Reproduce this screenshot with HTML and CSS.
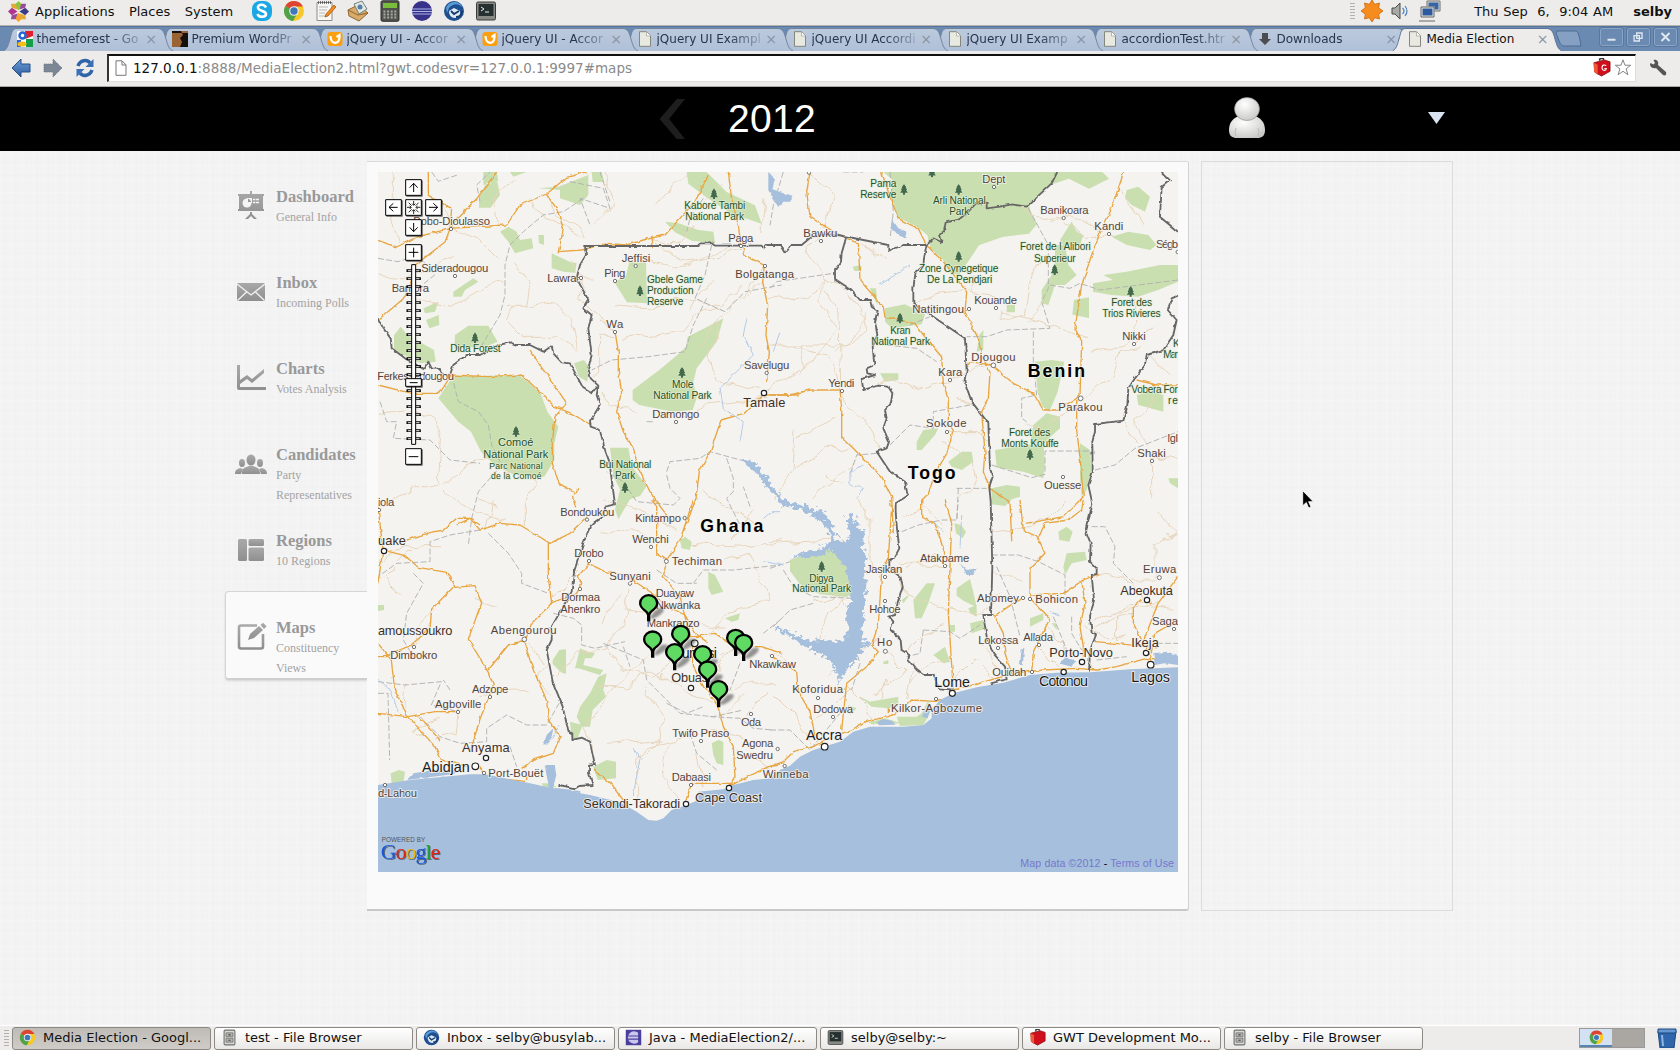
FILE: index.html
```html
<!DOCTYPE html>
<html lang="en">
<head>
<meta charset="utf-8">
<title>Media Election</title>
<link rel="stylesheet" href="styles.css">
</head>
<body>
<svg class="defs" width="0" height="0">
  <defs>
    <linearGradient id="tabFill" x1="0" y1="0" x2="0" y2="1"><stop offset="0" stop-color="#bccadd"/><stop offset="1" stop-color="#b0c0d7"/></linearGradient>
    <linearGradient id="iconGrey" x1="0" y1="0" x2="0" y2="1"><stop offset="0" stop-color="#a9a9a9"/><stop offset="1" stop-color="#8f8f8f"/></linearGradient>
    <linearGradient id="blueArrow" x1="0" y1="0" x2="0" y2="1"><stop offset="0" stop-color="#6f9fd6"/><stop offset="1" stop-color="#2c5c9e"/></linearGradient>
    <radialGradient id="person" cx=".4" cy=".3" r=".8"><stop offset="0" stop-color="#fff"/><stop offset="1" stop-color="#c4c4c2"/></radialGradient>
    <symbol id="tab" viewBox="0 0 172 24"><path d="M0.5 24C4 22 5 19 7 12C9 5 9 1.500 14 1.500H154C160 1.500 161 5 163 12C165 19 166 22 170 24"/></symbol>
    <symbol id="page" viewBox="0 0 16 16"><path d="M2.500.7h7l4 4v10.600h-11z" fill="#e8eae2" stroke="#85867c"/><path d="M9.500 1v4h4" fill="#fff" stroke="#aaa99f" stroke-width=".8"/></symbol>
    <symbol id="jq" viewBox="0 0 16 16"><rect x=".5" y="1" width="15" height="14" rx="3" fill="#f99f10"/><path d="M3.500 5c0 9 9 9 9 1V4l-3 2" fill="none" stroke="#fff" stroke-width="2.200"/></symbol>
    <symbol id="chrome" viewBox="0 0 22 22"><circle cx="11" cy="11" r="10" fill="#f6c928"/><path d="M11 11L2.300 6A10 10 0 0 1 20 6.500H11z" fill="#dd4432"/><path d="M2.300 6A10 10 0 0 0 10 21l4.500-8L11 11z" fill="#4fa24a"/><circle cx="11" cy="11" r="4.800" fill="#f4f4f4"/><circle cx="11" cy="11" r="3.700" fill="#3e78b8"/></symbol>
    <symbol id="bird" viewBox="0 0 22 22"><circle cx="11" cy="11" r="10" fill="#1e4f8f"/><path d="M3 8C6 0 17 0 20 8c-4-5-10-5-14 0l-2 5z" fill="#5b9bd8"/><path d="M6 11l5-3 6 3c1 4-2 7-5 7-4 0-6-3-6-7z" fill="#dfe9f3"/><path d="M8 11l3 3 5-3M13 17c4 0 6-3 6-6" fill="none" stroke="#123a6d" stroke-width="1.800"/></symbol>
    <symbol id="eclipse" viewBox="0 0 22 22"><circle cx="11" cy="11" r="10" fill="#39328a"/><path d="M1.500 9h19M1 11.500h20M1.500 14h19" stroke="#a9b6e8" stroke-width="1.200"/></symbol>
    <symbol id="term" viewBox="0 0 22 22"><rect x="1.500" y="2" width="19" height="18" rx="1.500" fill="#888a85" stroke="#3c3d3a"/><rect x="3.500" y="4" width="15" height="12" fill="#273030"/><path d="M6 7l3 2-3 2M10 12h4" fill="none" stroke="#e8f0e8"/></symbol>
    <symbol id="cabinet" viewBox="0 0 22 22"><rect x="4" y="1.500" width="14" height="19" rx="1.500" fill="#d7d7d3" stroke="#6e706b" stroke-width="1.400"/><path d="M6.500 5h9v5h-9zM6.500 12h9v5h-9z" fill="#b4b6b0" stroke="#6e706b"/><path d="M9.500 7.500h3M9.500 14.500h3" stroke="#444" stroke-width="1.500"/></symbol>
    <symbol id="toolbox" viewBox="0 0 20 20"><path d="M2 5L13 2l6 2v10l-9 5-7-4z" fill="#cf0f1b" stroke="#800a10" stroke-width=".8"/><path d="M2 5l4 2v11l-4-4z" fill="#ee5b38"/><path d="M8 3V1l4-1v2" fill="none" stroke="#333" stroke-width="1.500"/></symbol>
    <symbol id="tree" viewBox="-12 -18 24 34"><path d="M0-16L7-6H5L9 1H6L11 9H3v5h-6V9h-8L-6 1h-3l4-7h-2z" fill="#41694a" stroke="#e7efdc" stroke-width="2" paint-order="stroke"/></symbol>
    <g id="pin"><path d="M6-16L26-38Q50-44 44-30Q34-14 8-6z" fill="#000" opacity=".4" filter="url(#soft)"/><path d="M-5 0V-18C-8-32-29-35-29-55A29 27 0 0 1 29-55C29-35 8-32 5-18V0z"/><path d="M0-26C-6-36-22-40-22-55A22 20 0 0 1 22-55C22-40 6-36 0-26z" fill="#5fda63"/></g>
    <filter id="soft"><feGaussianBlur stdDeviation="3"/></filter>
    <filter id="rough" x="-5%" y="-5%" width="110%" height="110%"><feTurbulence type="fractalNoise" baseFrequency=".07" numOctaves="3" seed="4"/><feDisplacementMap in="SourceGraphic" scale="34" xChannelSelector="R" yChannelSelector="G"/></filter>
    <filter id="wiggle" x="-5%" y="-5%" width="110%" height="110%"><feTurbulence type="fractalNoise" baseFrequency=".02" numOctaves="2" seed="9"/><feDisplacementMap in="SourceGraphic" scale="34" xChannelSelector="R" yChannelSelector="G"/></filter>
    <filter id="jag" x="-5%" y="-5%" width="110%" height="110%"><feTurbulence type="fractalNoise" baseFrequency=".05" numOctaves="2" seed="2"/><feDisplacementMap in="SourceGraphic" scale="10" xChannelSelector="R" yChannelSelector="G"/></filter>
  </defs>
</svg>
<div class="desktop">
  <header class="panel">
    <svg class="foot" viewBox="0 0 22 22"><path d="M11 0l4 4-4 6-4-6z" fill="#8cc63f"/><path d="M11 22l4-4-4-6-4 6z" fill="#f2a52c"/><path d="M0 11l4-4 6 4-6 4z" fill="#b3348c"/><path d="M22 11l-4-4-6 4 6 4z" fill="#3c3b85"/><path d="M3 3h5l2 6-6-2zM19 19h-5l-2-6 6 2z" fill="#e2a838"/><path d="M19 3h-5l-2 6 6-2zM3 19h5l2-6-6 2z" fill="#9a4b9c"/></svg>
    <nav class="menus"><span>Applications</span><span>Places</span><span>System</span></nav>
    <div class="launchers">
      <svg viewBox="0 0 22 22"><rect x="1" y="1" width="20" height="20" rx="8" fill="#1aa8e4"/><path d="M15 7.500C13 3 6 4.500 7 8s8 2.500 8 6-7 4-8.500 0" fill="none" stroke="#fff" stroke-width="2.600"/></svg>
      <svg><use href="#chrome"/></svg>
      <svg viewBox="0 0 22 22"><path d="M2 2.500h15v18H2z" fill="#f6f6f2" stroke="#8d8d88"/><path d="M3 2.500h13" stroke="#555" stroke-width="2.500" stroke-dasharray="1 1"/><path d="M4 7h9M4 10h8M4 13h6M4 16h7" stroke="#b9b9b4"/><path d="M10 17l1-3 8-9 2 2-8 9z" fill="#f58a1c" stroke="#9b4c08" stroke-width=".7"/></svg>
      <svg viewBox="0 0 22 22"><path d="M1 10L11 5l10 8-9 8-10-5z" fill="#d8ab6a" stroke="#8c6530"/><path d="M7 4l8-3 5 8-8 5z" fill="#dfe8e4" stroke="#75807d"/><path d="M1 10l10 5 10-2" fill="none" stroke="#8c6530"/><circle cx="13" cy="7" r="2.500" fill="#577fa5"/></svg>
      <svg viewBox="0 0 22 22"><rect x="2" y=".8" width="18" height="20.500" rx="1.500" fill="#50524e" stroke="#2e302d"/><rect x="4" y="3" width="14" height="5" fill="#78bd3c"/><path d="M4.500 11.500h13M4.500 14.500h13M4.500 17.500h13" stroke="#a8aaa5" stroke-width="1.800" stroke-dasharray="2 1.600"/></svg>
      <svg><use href="#eclipse"/></svg>
      <svg><use href="#bird"/></svg>
      <svg><use href="#term"/></svg>
    </div>
    <div class="tray">
      <i class="grip"></i>
      <svg class="sun" viewBox="0 0 22 22"><path d="M11 0l2.700 4.300L18.500 3l-.8 4.800L22 11l-4.300 3.200.8 4.800-4.800-1.300L11 22l-2.700-4.300L3.500 19l.8-4.800L0 11l4.300-3.200L3.500 3l4.800 1.300z" fill="#f68b1e" stroke="#cb6708" stroke-width=".8"/></svg>
      <svg class="vol" viewBox="0 0 22 22"><path d="M3 8h3l5-5v16l-5-5H3z" fill="#a8aaa5" stroke="#4a4c49"/><path d="M13.500 8q3 3 0 6M16 6q4 5 0 10" fill="none" stroke="#4e7fbd" stroke-width="1.200"/></svg>
      <svg class="net" viewBox="0 0 22 22"><path d="M8.500 1.500h12v9h-12z" fill="#3665a6" stroke="#d9d9d5" stroke-width="2"/><path d="M8 1h13v10H8z" fill="none" stroke="#777"/><path d="M2.500 7.500h12v9h-12z" fill="#2d5a9c" stroke="#e5e5e2" stroke-width="2"/><path d="M2 7h13v10H2zM0 21h16" fill="none" stroke="#666"/></svg>
      <span class="clock">Thu Sep&nbsp; 6,&nbsp; 9:04 AM</span><b class="who">selby</b>
    </div>
  </header>

  <div class="tabstrip">
    <div class="tab"><svg class="shape"><use href="#tab"/></svg><svg class="fav" viewBox="0 0 16 16"><rect width="16" height="16" rx="1" fill="#fff"/><path d="M8 0h8v5l-8 3z" fill="#e2202c"/><path d="M9 8h7v8H9z" fill="#13a04a"/><path d="M0 9h4v7H0z" fill="#2a64d8"/><circle cx="5.500" cy="4.500" r="3" fill="none" stroke="#2866d3" stroke-width="2.500"/><ellipse cx="5" cy="13" rx="4.500" ry="2.600" fill="#f7bd17"/></svg><span>themeforest - Go</span><i>×</i></div>
    <div class="tab"><svg class="shape"><use href="#tab"/></svg><svg class="fav" viewBox="0 0 16 16"><path fill="#9a6334" d="M0 0h16v16H0z"/><path d="M16 0H9l2 4-3 3 2 4-2 5h8zM0 0h16v2H0z" fill="#15100c"/></svg><span>Premium WordPr</span><i>×</i></div>
    <div class="tab"><svg class="shape"><use href="#tab"/></svg><svg class="fav"><use href="#jq"/></svg><span>jQuery UI - Accor</span><i>×</i></div>
    <div class="tab"><svg class="shape"><use href="#tab"/></svg><svg class="fav"><use href="#jq"/></svg><span>jQuery UI - Accor</span><i>×</i></div>
    <div class="tab"><svg class="shape"><use href="#tab"/></svg><svg class="fav"><use href="#page"/></svg><span>jQuery UI Exampl</span><i>×</i></div>
    <div class="tab"><svg class="shape"><use href="#tab"/></svg><svg class="fav"><use href="#page"/></svg><span>jQuery UI Accordi</span><i>×</i></div>
    <div class="tab"><svg class="shape"><use href="#tab"/></svg><svg class="fav"><use href="#page"/></svg><span>jQuery UI Examp</span><i>×</i></div>
    <div class="tab"><svg class="shape"><use href="#tab"/></svg><svg class="fav"><use href="#page"/></svg><span>accordionTest.htr</span><i>×</i></div>
    <div class="tab"><svg class="shape"><use href="#tab"/></svg><svg class="fav" viewBox="0 0 16 16"><path d="M5 2h6v6h3l-6 6-6-6h3z" fill="#4b4d50"/></svg><span>Downloads</span><i>×</i></div>
    <div class="tab active"><svg class="shape"><use href="#tab"/></svg><svg class="fav"><use href="#page"/></svg><span>Media Election</span><i>×</i></div>
    <svg class="newtab" viewBox="0 0 27 18"><path d="M2 1h18c3 0 4 3 6 15H9C5 16 4 10 1 3z" fill="#86a0c4" stroke="#4e6d96"/></svg>
    <div class="winbtns">
      <svg viewBox="0 0 23 18"><path d="M7 12h9" stroke="#dfe7f1" stroke-width="2.200"/></svg>
      <svg viewBox="0 0 23 18"><path d="M9.500 4.500h6v6h-6zM6.500 7.500h6v6h-6z" fill="none" stroke="#dfe7f1" stroke-width="1.500"/></svg>
      <svg viewBox="0 0 23 18"><path d="M7 4.500l9 9M16 4.500l-9 9" stroke="#dfe7f1" stroke-width="2.200"/></svg>
    </div>
  </div>

  <div class="toolbar">
    <svg class="nav-ic" viewBox="0 0 20 20"><path d="M1 10L10 1v5h9v8h-9v5z" fill="url(#blueArrow)" stroke="#274f86"/></svg>
    <svg class="nav-ic" viewBox="0 0 20 20"><path d="M19 10L10 1v5H1v8h9v5z" fill="#7b8794" stroke="#6b7580" stroke-dasharray="1 1"/></svg>
    <svg class="nav-ic" viewBox="0 0 20 20"><path d="M3 8C5 2 12 1 15 5M17 12c-2 6-9 7-12 3" fill="none" stroke="#2f64a8" stroke-width="3.500"/><path d="M18.500 1v8h-8zM1.500 19v-8h8z" fill="#3a70b5"/></svg>
    <div class="url">
      <svg viewBox="0 0 12 16"><path d="M1 .8h6l4 4v10.500H1zM7 1v4h4" fill="#fff" stroke="#777"/></svg>
      <p><b>127.0.0.1</b>:8888/MediaElection2.html?gwt.codesvr=127.0.0.1:9997#maps</p>
      <svg class="gwt" viewBox="0 0 20 20"><use href="#toolbox" width="20" height="20"/><path d="M15 8c-5-3-6 5-2 5 2 0 2-2 2-2h-2" fill="none" stroke="#fff" stroke-width="1.200"/></svg>
      <svg class="star" viewBox="0 0 20 20"><path d="M10 1.500l2.200 6h6.300l-5 4 1.900 6.500-5.400-3.800L4.600 18l1.900-6.500-5-4h6.300z" fill="#fff" stroke="#777"/></svg>
    </div>
    <svg class="wrench" viewBox="0 0 18 18"><path d="M1.500 4l3 1.500L6 4 4.500 1C8 0 10 3 9 6l8 7c1 3-1 4-3 3L7 9C3 10 0 7 1.500 4z" fill="#555"/></svg>
  </div>

  <main class="site">
    <div class="topbar">
      <svg class="prev" viewBox="0 0 28 44"><path d="M19 1h8.500L11 22l16.500 21H19L1 22z" fill="#1e1e1e"/></svg>
      <h1>2012</h1>
      <svg class="user" viewBox="0 0 38 42"><path d="M1 33C1 25 6 20 12 19h14c6 1 11 6 11 14 0 6-3 8-8 8H9c-5 0-8-2-8-8z" fill="url(#person)"/><path d="M8 31q-2 4 0 8M30 31q2 4 0 8" fill="none" stroke="#bbb"/><ellipse cx="19" cy="12" rx="12.500" ry="11.500" fill="url(#person)" stroke="#8b8b88" stroke-width=".6"/></svg>
      <svg class="caret" viewBox="0 0 17 12"><path d="M0 0h17L8.500 12z" fill="#dbe3f0"/></svg>
    </div>
    <div class="content">
      <nav class="side">
        <a class="item"><svg viewBox="0 0 32 32"><path d="M15 0h2v3h12v2h-1v13H4V5H3V3h12zM3 18h26v2H3zM15 21h2v2l5 5h-3l-3-3-3 3h-3l5-5z"/><circle cx="12" cy="12" r="4.500" fill="#f5f5f5"/><path d="M12 12V7h5v5z" class="bg"/><path d="M13 7.500A4 4 0 0 1 16 11h-3z"/><path d="M18 8.500h6M18 11.500h6" stroke="#f5f5f5" stroke-width="1.300" stroke-dasharray="2 .6 9"/></svg><div><h2>Dashboard</h2><p>General Info</p></div></a>
        <a class="item"><svg viewBox="0 0 32 32"><rect x="2" y="6" width="28" height="18" rx="1"/><path d="M2 7l14 11L30 7M2.500 23.500l9-8.500M29.500 23.500l-9-8.500" fill="none" stroke="#f2f2f2" stroke-width="1.300"/></svg><div><h2>Inbox</h2><p>Incoming Polls</p></div></a>
        <a class="item"><svg viewBox="0 0 32 32"><path d="M2 2h3v22h26v3H4q-2 0-2-2z"/><path d="M5 17l7-5 5 4L29 6v4L17 20l-5-4-7 5z"/></svg><div><h2>Charts</h2><p>Votes Analysis</p></div></a>
        <a class="item"><svg viewBox="0 0 32 32"><ellipse cx="16" cy="11" rx="4.500" ry="5.500"/><path d="M7 25c0-6 2-6 7-8h4c5 2 7 2 7 8z"/><ellipse cx="7" cy="14" rx="3" ry="4"/><ellipse cx="25" cy="14" rx="3" ry="4"/><path d="M0 25c0-4 2-5 5-6l3 1-2 5zM32 25c0-4-2-5-5-6l-3 1 2 5z"/></svg><div><h2>Candidates</h2><p>Party Representatives</p></div></a>
        <a class="item"><svg viewBox="0 0 32 32"><rect x="3" y="4" width="9" height="22" rx="1.500"/><rect x="13.500" y="4" width="15.500" height="7" rx="1.500"/><rect x="13.500" y="12.500" width="15.500" height="13.500" rx="1.500"/></svg><div><h2>Regions</h2><p>10 Regions</p></div></a>
        <a class="item active"><svg viewBox="0 0 32 32"><path d="M22 3.500H6q-2 0-2 2v19q0 2 2 2h20q2 0 2-2V12" fill="none" stroke="url(#iconGrey)" stroke-width="2.600"/><path d="M13 18l2-6L24 4l4 4-9 8zM25.500 3L28 .8l3.500 3.500L29 7z"/></svg><div><h2>Maps</h2><p>Constituency Views</p></div></a>
      </nav>

      <section class="card">
        <svg class="map" viewBox="24 21 2400 2100">
          <path d="M24 21h2400v2100H24z" fill="#f4f3f0"/>

          <!-- parks -->
          <g class="park">
            <path d="M205 700L250 632l90 0 110 0 60 48 22 60 33 45-12 50 0 50-30 50-90-5-60-30-40-40-30-60-38-30z"/>
            <path d="M255 510l40-28 60 0 28 48-30 12-100 10zM72 560V510l20-25 20 25 80 45 5 35-45 5-50-25zM340 60l45-12-5-27-40 0zM328 90l22-35 32-5 8 40-28 38-35 0zM420 21h50l-40 14zM505 70l60-5 90-35 0 60-25 30-60-20 0-25zM390 200l25-15 25 15 10 25 35-5 5 30-55 15-20-35zM505 210h17v30l-15-5zM545 265l60 28 15 0-5 30-35-3-35-10zM250 380l60-40 15 10-40 25-10 20-25 0zM160 430l45-20-10 30-30 5zM168 465l38-15 2 30-30 10zM612 595l30-10 15 20-5 45-25-15zM665 21h30l8 30-35 0zM950 21h60l60 60 85 40 20 55-90-30-70-45-60-45zM885 170l40 5 60 20 45 5 5 35-70-8-50-25z"/>
            <path d="M778 290h50l3 125-60-3-38-60 35-20zM1060 460l-20 70-60 80-10 40 10 50-12 35-60 5-100-20-20-15 0-30 80-60 60-50 20-20 5-30 80-40zM720 848l55 0 10 55 45 60-20 30-30 10-35 60-10-30 15-60-20-40z"/>
          </g>
          <g class="park" transform="translate(1200 0)">
            <path d="M340 21l35 30-15 30 22 75 60 30 30 25 10 40 35 30 20 40 30 10 20-30 40-60 70-25 80-10 25-30-20-35-5-25 60-55 60-20 60 30 60-30-20-20z"/><path d="M720 90l50-69 70 0-5 35-50 60-60-10zM1070 75l35-10 35 30-15 45-40-20-20-20zM905 170l15 30 20 10-10 30-50 0-10-15zM1025 215l50-15 60 10 25 30-20 15-70-15zM855 240l30 0 10 60 25 30-35 30-30 0-20 60-20-5 0-40 40-60zM1000 330l70-10 100-20 54 0 0 50-60 25-60 20-80-5-55-10 0-25 60-10zM912 405l45-8 0 62-50-10zM345 430l60-12 60 30-10 30-90 12-20-20zM710 420l25 0 0 22-25 0zM330 625l55 0 0 20-40 5zM795 590l50-5 38 5-20 90-25 60-20-15-15-40zM790 780l40-35 40 10 0 35-50 45-40 0zM675 855l60-10 85-10 5 60-5 45-60-20-80-12zM440 830l20-35 45-5-10 20-40 45-15 0zM535 890l40-30 30 0 5 30-35 25-30-10zM930 835l30 20 5 60-15 60-15 20-5-50zM1195 940h30v30l-25-15zM1100 690l45-10 35 10 0 50-75-20zM665 970l45-10 40 5 0 30-60 20-25 0zM300 370l18 0 5 50-18-35zM248 305l25-5 0 18-20 0zM628 510l12-15 0 60-20 5z"/>
          </g>
          <g class="park" transform="translate(0 1005)">
            <path d="M24 315h18v15l-18 3zM548 480l20-30 20-3 0 75-15-5-25-25zM615 505l15-60 25 10 20 5-10 15-20 0-5 20 60 15-10 15-65-20zM620 650l10-30 30-40 25-50 25-10-10 50 8 20-40 40-8 50-25 0zM600 665l38 10-15 40-18 0zM670 800l40-20 28 5 0 50-55 5zM1025 730l20-10 15 5 0 70-20-5-10-25zM62 820l25-10 18 5-5 35-35 3zM930 120l15-10 20 15-5 25-25-5zM1015 215l20 10 25 50-35 10-10-20zM1065 355l45-15-5 20-20 5zM515 850l30 0 15 12-40 0z"/>
          </g>
          <g class="park" transform="translate(1200 1005)">
            <path d="M60 180l60-20 60-12 45 20 20 40 25 55-40 28-80-8-60-30-30-40zM430 300l40-50 25 0-20 60-20 45-20 0zM560 265l40-28 10 40 10 45-40-20-20-15zM595 325l25-10 0 35-20-10zM600 370l40-10 10 25-45 15zM490 465l35-25 15 45-20 5zM880 200l10-40 55-5 5 25-45 10-20 35zM865 95l25-15 18 15-10 30-30-5zM553 70l20 5 15 20-10 20-20-15zM395 300l20-15 0 5-15 20zM780 355l40-15 0 20-40 20zM845 370h15v20zM340 485l15-5 0 12-15 0zM540 375l15 0 0 20-15 0zM665 0l60 0-20 18-40-5z"/>
          </g>

          <!-- minor roads -->
          <g class="minor" filter="url(#wiggle)">
            <path d="M70 21v90l-10 60 20 60M215 110l30 80 80 30 60 60M480 100l40 60 60 20 60 40M24 330l90 10 80-30 60-40M120 400l120 30 100-60 60-20M430 290l50 60-10 80-60 0M470 430l70-20 60 50 20 90-60-30-100 0-50-50 20-40M24 745l80-10 80 20 30 60-10 150-60 0-110 60M220 965l80-70 50-10M215 975l90 60 100 30M410 920l40-10 50 40-40 60 0 70M640 340l-10 60 80 70 25 30M600 290l60 60M700 470l35 30M683 508h55M683 508v110l-20 20M690 680l30 40 80 20M735 420l120 10 60-30 140 20 60-60M760 520l180-20 60-70 60 0M850 230l100 60 100-10 60-30M830 290l90 20 160-60M960 440l30-60 40-40M990 540l60-80 70-70 60-80M1050 480l-30 100 20 70 140 20M920 770l90-50 180-20M1180 340l-60 60M1000 980l160 100M700 21l30 100-60 60M530 90l30 60 70 40 20 30M860 120l50-60 40-39M1000 120l60-60M970 180l-50 60-70-20M380 180l-10-80 70-60M1175 200l10-100"/>
          </g>
          <g class="minor" filter="url(#wiggle)" transform="translate(1200 0)">
            <path d="M-20 680l160-100 60-90-60-80 30-60-60-100 60-60 20-100-70-60 30-60M165 340l60 30 60 100-60 70-200 0M165 350l-60 50-120 0M170 370l40 90 5 200M0 540l90 10 80 20 40 90 20 60M90 540l10 60-20 30M75 790l-5 120-60 90M75 820l120-60M75 910l100-60 60 0M235 720l60 60 50 80M120 1000l140-110M270 230l80 60M430 420l60-30 90-10 90 10M540 640l120-40M545 650l-120 20-60-30-60 20M560 700l50 20M690 430l10 40 60-20 20-120 40-60M690 440l120 30 120 45 30 5M600 380l20-60M770 470l60-60M840 180l60-30 100 50M880 160l-60 10-60-40M880 170l60 50 90-10M960 555l100-10 40-60 0-80M940 700l90-70 20-70 60-10M1135 570l60 60M1090 535l60-50M1095 765l50 120 0 115M1095 770l60-80M1145 885l80-5M1070 710l-10 60 35 60M530 800l90 0 40 50M520 830l90 60 10 60-60 60M220 960l-60-30M930 700l-100 80-60 0M1060 80l60 100M280 440l10 60-100 60"/>
          </g>
          <g class="minor" filter="url(#wiggle)" transform="translate(0 1005)">
            <path d="M350 90l20-90M24 200l60-60 120 0M100 280l-60-50 80-80M550 290l80-80M200 320l-60 60-10 60M320 300l60 20M480 430l40 60M380 20l-60-20M130 440l60-70M265 640l-10 60-60 20M270 640l60-60 150-10M210 650l-80 40 70 60M100 630l10-80M540 480l-40 60 40 40M560 540l60-80 80-10 60-80 20-100M700 430l60 80 90 20 60-60M860 440l-60 60-60 60-60 0M700 560l60 10 80-60 60 30M740 560l-100 120 20 60M870 520l80 60 100 30M820 560l60 90-20 80-60 40 0 120M870 720l-160 10M800 790l60-60 180-40 80 20M1020 400l60-60 60-20 60-20-60-140-80 20M1070 390l-80-20M960 130l180 10 90-20M850 140l-60-60-100 20M700 0l100 30 120 60M1150 20l-60 100M1050 470l60-30M1075 460l-40 60 30 60 100-40 60 20M1125 580l-60 60M1130 640l60-60M930 890l-60-60 20-100M1000 860l-20-100M1100 750l100 60M760 330l100 10M690 370l60-90"/>
          </g>
          <g class="minor" filter="url(#wiggle)" transform="translate(1200 1005)">
            <path d="M0 130l190-10M270 0l30 60 0 120 40 70M0 440l60 50M10 580l60 60 50 90M130 310l70-20 40 40M150 420l30-90 60-30M250 560l-60 60-60 40M230 560l60 60 20 60M330 410l-100 60-60 60M350 540l-20 60M345 450l60 60-90 70M410 460l60-60 60-20M430 480l-20 120M540 470l-60 20-60 60M555 540l60-60 60 60M540 330l100 10 60-60M540 340l-140-60-20-100M535 200l-150-10M395 220l100-60 40 30M400 50l60-30 60 60M690 540l-20-80-40-30M665 100l160-40 60-60M665 220l100 20M800 440l60 60M820 370l60 60 10 60M940 370l60 40 60 0M970 380l60-30 60-10M1040 420l0-80 120-30M1155 230l0-100 60-30M1130 300l-160 60M1190 100l30 10M1130 290l-80-60-70-10M1165 240l-80 0M1150 320l70 10M1160 30l60 70"/>
          </g>

          <!-- administrative boundaries -->
          <g class="dash">
            <path d="M185 21l20 28 60-20M330 110l-10-50 40-39M24 280l60 10 60-20 50 60-50 40M640 100l-60 40-60 10-60 50-40 40-15 60 0 90-15 60-60 100M600 50l100 20 20 60-90-30 30 80M690 21l30 90M1000 100l-40 60-10 40M1025 240l-20 90-30 70 90 40 60-60 110-20M1010 400l-40 80-25 80-110 15-110 10-60 30M245 630l20 80 60 30 30 40 10 60 30 60-70 80-20 80-10 80M30 710l20 60 30 0-10 50 110 5 60 60 90 10M890 920l10-30 90-10 30-20 110 30M890 930l10 40 30 30-20 20-110-10-40-60-50-30M1070 880l20 60 0 40-20 20 40 80M830 770l20 0"/>
          </g>
          <g class="dash" transform="translate(1200 0)">
            <path d="M40 21l-30 100-10 60M360 21l10 120-10 80M220 21l60 0M775 130l60 110 0 130-20 40 25 80-130 5-60 20-60 0M790 500l0 90 10 100-45 10 0 60 15 10M840 360l60 10 30-15 60 20 234-30M0 370l20-20 170-25M600 720l-110 20 0 50-70-10-60 60M560 970l90 0M565 970l-5 100M665 900l120 38 40-10 0-70 140 0M975 915l60-15 60-50 129-50M320 865l-60 5-20 60M350 540l90 10 60 40M420 480l60-25"/>
          </g>
          <g class="dash" transform="translate(0 1005)">
            <path d="M330 90l-90 15-60 20 0 60-100 5-56 40M355 100l60 60 40 60 0 30 80 30M130 220l30 30-50 90-10 80 30 50M24 580h30l5 200M24 545l80 10 110-10-30 70 80 20 0-20M240 570l-20-30M550 340l60 15 25 20 0 60 40 10 90-20M150 650l60 60 60 20 80-5 0-40 60-40 60 30 60 0 40-70M420 740l20 60M590 280l-15 60M970 250l30-40 90 0 140-15M860 210l60 40 60 0M700 430l120 50 10 60 100 100 100 10 90-20M760 440l20 60M1020 650l90 5 40 30 60 5M960 700l20 60 60 50M1180 400l50-40M1110 490l-30 80M890 610l60 30 50-20M1140 20l-20-60"/>
          </g>
          <g class="dash" transform="translate(1200 1005)">
            <path d="M0 205l60-20M40 210l30 50 60 30 130 5M10 380l50-50 70-20M200 100l80 90-15 80-15 160 20 60-25 80M395 95l50-20 70-15 45 0 5-60M460 390l80 5 30 20 60-40M460 390l-10 70-40 10M665 165l80 0 60 20 80 40 0 60M680 200l40 90 30 120M905 350l0 50 30 50M965 80l40 0 30 60-5 50 60 60M1160 430l64 0M980 480l90-10M0 690l60 0 60 60 90-110M850 350l40 100"/>
          </g>

          <!-- trunk roads -->
          <g class="road" filter="url(#jag)">
            <path d="M175 21v70l70 40-5 60-100 25-60 30-56-20M380 21l-60 80-60 60-20 30-15 40-90 70-15 60-20 40-71 60M240 190l170-10 40-60 80-33 60-50 60-16M530 90l30 40 20 60-15 70 70-5 75-20 60 5 50-15 65-15 90-100 40-80M845 210l5 40M1075 21l10 80 20 80 5 40 15 50 58 30-5 50 15 70-5 90 10 50-8 90M24 660l100 25 85 0 35-55 110 5 100-5 40 35 60 60 50 20 60 35M480 555l40 60 30 40 40 60-35 40-8 80 0 60 20 60 50 30 10-15M607 990l10 40M735 500l10 60 0 60 10 60-15 60 20 60 30 50 15 60 40 80 60 80M1183 685l-60 60-70 20-30 90-35 65-10 80-30 80-5 20M1183 690h100M260 1080l40-20 30 20"/>
            <path d="M1320 21l-10 60 10 75 80 50 65 30 5 110 70 80 5 30 90 20 30 40 50 60 5 80 15 50 0 70 15 20-20 70-35 60-20 60-20 20 0 50 40 20 30 90M1535 21l20 60 30 80 60 30 25 50 60 60 60 80-5 60 40 80 10 50 25 50-5 80-20 40 10 120-5 60 20 50 60 40 5 115M1870 600l-40-5-30-5-10 20M1870 605l60 50 60 30 30 50 40 0 60-35 10-10 5-160-20-40 20-130 40-120 50-110 40-120 0-20 60-40M2120 705l0 90 10 80 10 120-60 60-110 20M1200 690l60 0 60-15 90 0 5 60 0 80 60 60 60 60 30 60 5 110M2300 645l60 15 64 0"/>
          </g>
          <g class="road" transform="translate(0 1005)" filter="url(#jag)">
            <path d="M24 20l15 130-15 100M45 152l60 15 40 35 85 15 25 45 60-5 20 50-40 110 60 100 15 40-40 100-30 100M250 262l-65 65-5 60-60 50-70 30-26 0M24 430l40 50 10 90 40 80-90-10M115 650l80-15 70 0M115 650l80 90 20 40 80 20M145 650l65 70M110 120l60-20 50-10 40-35 40 0 30 35 60-20 60 5 50 30 40 25 60-30 50-50M535 130l0 100 10 80-60 60-20 50-50 15-60 75M460 420l30 90 40 90 5 60 35 50-20 50-60 20-35 25M540 310l80-30 15-30-10-20 30-40 50 25 60 10 90 60 30 30 60 30 35 60 30 20M845 0l15 20 0 140 30 20 40-60 30-90 10-30M890 180l-10 50 50 60 15 60 15 60 15 0 60-10 60 40 80 0 60 20M970 430l0 70 30 60 40 50 20 70 30 60 5 90-10 20-90 0-30 0-20 60M330 800l20 30 120 15M470 840l0-20M670 810l50 40 40 50M1075 860l120-60 35-5"/>
          </g>
          <g class="road" transform="translate(1200 1005)" filter="url(#jag)">
            <path d="M0 465l80 50 5 60 35 60 15 75M0 800l40-15 30-30 60-15 35-20M215 700l30-10 40-25 70-15 40-20 30-30 80 5 50-20M215 690l15-140 60-50 35-45-20-20 20-60 10-160 20-40 10-150-5-25M525 0l20 70-5 130-5 140 15 230 60-15 120-35 90-10 100-5 60 5 60-10 90-25 50 10M750 0l10 90 40 20 25 50-45 45 0 90 60 60-15 30-35 70-5 60M805 115l20-45 70-10 40-30 5-30M780 285l100-5 30-20 30-20 50-20M935 240l10 70-15 70 10 60 0 30M670 350l60-40 30-20M670 340l30 60 5 60 20 60M975 425l60 5 100 10 20-15 5 20M1115 300l-25 20 0 50 30 60 15 20 10 40M1145 310l-15-10M1224 230l-60 80-50 130M1224 360l-70 40-10 60M355 640l0-20"/>
          </g>

          <!-- water -->
          <g class="water" filter="url(#rough)">
            <path d="M1115 884L1150 888L1180 925L1205 960L1245 1005L1290 1020L1330 1030L1365 1045L1388 1085L1395 1120L1425 1135L1440 1110L1430 1060L1450 1040L1460 1080L1485 1105L1475 1140L1490 1170L1482 1230L1492 1260L1482 1310L1480 1390L1478 1430L1505 1435L1475 1455L1450 1490L1420 1525L1408 1560L1402 1520L1375 1480L1335 1460L1290 1435L1215 1388L1225 1385L1290 1415L1330 1432L1355 1420L1400 1430L1425 1425L1435 1380L1425 1350L1440 1310L1442 1270L1435 1220L1410 1190L1385 1155L1345 1150L1385 1135L1372 1090L1330 1055L1290 1035L1235 1020L1200 975L1170 935z"/>
            <path d="M1370 1150l-60 10-50 20 60-5 50-5zM1450 1170l-20 60 20 10 20-50z"/>
          </g>
          <g class="water" filter="url(#jag)">
            <path d="M1195 21l20 20-10 40 30 30-10 15-30-50zM1200 70l40 15 25 10 0 15-30 0-35-25zM1565 160l20 30 25 10-5 20-20-10-20-20zM1770 1195l20 20 30-5-10 20-20 0zM524 1800l30 0 5 30-10 40 20 0 60 8 10 10-100-12zM130 1825l60-10 100 5-60 10-120 15zM520 1740l10-30 20-20-10 40zM2350 1465l40-5 34 10 0 30-40-5-30 5zM2065 1495l20-15 30 5-10 20zM1950 1500l5-50 8 0-5 50z"/>
          </g>
          <g class="stream" filter="url(#jag)"><path d="M1180 1060l25-20 25 0M1130 460l-10 50 30 60-100 100 10 60 60 40-10 60M1230 500l-20 60M530 1740l40-60M790 1890l20-110-20-30M24 1540l40 40 20 60M1530 360l90-60M1480 900l-40 20 0 40 40 10-20 30M1690 1070l30 30M1770 1150l5-100M1180 1190l60 10M2040 1340l30 10"/></g>
          <path class="water" d="M24 1860L120 1845L300 1828L345 1828L480 1855L560 1873L660 1890L750 1912L800 1940L835 1965L860 1967L880 1960L905 1935L950 1920L985 1905L985 1880L1060 1873L1090 1860L1150 1845L1200 1840L1230 1815L1260 1802L1290 1775L1330 1755L1410 1730L1450 1700L1500 1685L1600 1685L1660 1680L1685 1660L1685 1635L1710 1605L1750 1585L1820 1567L1900 1553L1980 1530L2060 1523L2160 1522L2280 1513L2424 1507V2121H24z"/>
          <g class="park"><path d="M1470 1595l30 15 85-15 0 30-30 5-50-5zM1580 1655l60 0 15-10 20-40 10 30-25 45-70 3zM1495 1672l50-12 50 15-90 2zM1435 1620l25 10-20 20z"/></g>
          <path class="water" d="M1520 1672l20-10 25 5 12 12-50 2zM1655 1655l18-30 8 5-8 30z"/>

          <!-- national borders -->
          <g class="border" filter="url(#jag)">
            <path d="M24 460L40 490L62 520L65 550L105 580L140 600L160 612L175 590L185 610L210 612L212 625L240 630L250 600L290 570L330 570L385 540L420 532L440 540L480 540L520 560L545 543L550 565L575 592L600 595L640 670L665 685L680 665"/>
            <path d="M645 243L648 270L630 300L620 340L655 405L640 430L665 450L655 490L665 570L655 610L662 640L685 662L680 690L690 720L660 770L662 785L690 795L705 855L718 890L735 1018L705 1025L705 1050L675 1070L660 1085L640 1135L612 1220L605 1280L545 1385L545 1425L530 1455L548 1550L578 1625L595 1700L607 1705L607 1725L635 1718L660 1730L675 1800L657 1802L657 1825L668 1860L628 1863L615 1870L568 1860L568 1866"/>
            <path d="M640 243L985 243L987 235L1025 235L1035 242L1175 242L1180 250L1190 240L1230 240L1245 265L1265 240L1295 240L1325 215L1405 210L1555 240L1555 258L1600 240L1670 240"/>
            <path d="M1428 218L1415 265L1413 290L1395 315L1395 342L1440 372L1470 405L1500 405L1505 425L1523 438L1515 470L1522 510L1508 545L1513 600L1490 610L1492 625L1515 630L1475 642L1480 675L1525 662L1555 665L1567 685L1563 715L1545 735L1550 760L1540 790L1557 830L1550 850L1520 860L1560 920L1605 950L1613 992L1577 1015L1577 1040L1580 1080L1588 1150L1575 1175L1558 1185L1558 1210L1592 1237L1598 1265L1580 1325L1575 1350L1558 1355L1570 1370L1562 1395L1592 1425L1595 1455L1618 1470L1615 1485L1640 1515L1660 1530L1690 1530L1710 1573L1750 1577"/>
            <path d="M1670 240L1662 280L1660 300L1637 320L1630 370L1630 415L1785 520L1790 620L1783 648L1805 710L1855 775L1860 910L1868 935L1858 965L1862 1010L1867 1205L1863 1350L1840 1350L1850 1415L1870 1465L1905 1505L1910 1543L1862 1555"/>
            <path d="M1670 240L1690 220L1715 232L1710 205L1722 200L1727 172L1765 165L1795 140L1815 118L1850 113L1850 130L1890 125L1925 118L1970 125L2045 55L2062 21M2375 21L2400 46L2375 66L2370 156L2424 200"/>
            <path d="M2424 392L2405 400L2393 435L2420 465L2410 510L2380 555L2330 570L2325 600L2295 640L2275 670L2272 720L2260 767L2175 777L2175 800L2167 830L2168 920L2155 960L2167 1015L2148 1100L2162 1135L2160 1190L2180 1210L2180 1227L2165 1230L2172 1305L2160 1355L2165 1405L2178 1410L2160 1455L2157 1520"/>
          </g>

          <!-- place dots -->
          <g class="dots">
            <circle cx="243" cy="192" r="5"/><circle cx="255" cy="333" r="5"/><circle cx="633" cy="339" r="5"/><circle cx="797" cy="303" r="5"/><circle cx="735" cy="348" r="5"/><circle cx="735" cy="501" r="5"/><circle cx="1113" cy="243" r="5"/><circle cx="1185" cy="303" r="5"/><circle cx="1190" cy="624" r="5"/><circle cx="918" cy="771" r="5"/><circle cx="651" cy="1064" r="5"/><circle cx="944" cy="1059" r="5"/>
            <circle cx="1317" cy="23" r="5"/><circle cx="1353" cy="228" r="5"/><circle cx="1872" cy="66" r="5"/><circle cx="2081" cy="159" r="5"/><circle cx="2217" cy="207" r="5"/><circle cx="2423" cy="261" r="5"/><circle cx="1797" cy="432" r="5"/><circle cx="1878" cy="429" r="5"/><circle cx="2292" cy="537" r="5"/><circle cx="1740" cy="645" r="5"/><circle cx="1416" cy="678" r="5"/><circle cx="1870" cy="601" r="7"/><circle cx="2132" cy="700" r="7"/><circle cx="1731" cy="801" r="5"/><circle cx="2346" cy="888" r="5"/><circle cx="2079" cy="936" r="5"/>
            <circle cx="657" cy="1188" r="5"/><circle cx="843" cy="1146" r="5"/><circle cx="889" cy="1189" r="6"/><circle cx="780" cy="1256" r="5"/><circle cx="630" cy="1272" r="5"/><circle cx="463" cy="1423" r="7"/><circle cx="132" cy="1446" r="5"/><circle cx="360" cy="1596" r="5"/><circle cx="264" cy="1641" r="5"/><circle cx="342" cy="1824" r="5"/><circle cx="45" cy="1860" r="5"/><circle cx="963" cy="1860" r="5"/><circle cx="993" cy="1728" r="5"/><circle cx="1143" cy="1647" r="5"/><circle cx="1206" cy="1473" r="5"/><circle cx="1223" cy="1752" r="5"/><circle cx="1244" cy="1803" r="5"/><circle cx="1344" cy="1599" r="5"/><circle cx="1389" cy="1656" r="5"/><circle cx="1546" cy="1459" r="6"/><circle cx="1545" cy="1236" r="5"/><circle cx="1545" cy="1308" r="5"/><circle cx="1725" cy="1203" r="5"/><circle cx="1959" cy="1299" r="5"/><circle cx="1980" cy="1302" r="5"/><circle cx="1884" cy="1449" r="5"/><circle cx="2007" cy="1440" r="5"/><circle cx="1986" cy="1521" r="5"/><circle cx="1698" cy="1602" r="5"/><circle cx="2368" cy="1238" r="6"/><circle cx="2412" cy="1392" r="5"/><circle cx="27" cy="1035" r="5"/>
          </g>
          <g class="dots big">
            <circle cx="1182" cy="684" r="8"/><circle cx="42" cy="1158" r="8"/><circle cx="348" cy="1779" r="8"/><circle cx="316" cy="1804" r="10"/><circle cx="948" cy="1917" r="8"/><circle cx="1077" cy="1869" r="8"/><circle cx="963" cy="1569" r="8"/><circle cx="974" cy="1435" r="10"/><circle cx="1364" cy="1745" r="10"/><circle cx="1747" cy="1585" r="9"/><circle cx="2081" cy="1521" r="8"/><circle cx="2136" cy="1491" r="8"/><circle cx="2331" cy="1305" r="8"/><circle cx="2328" cy="1464" r="8"/><circle cx="2342" cy="1499" r="10"/>
          </g>

          <g class="trees">
            <use href="#tree" x="302" y="500" width="26" height="36"/><use href="#tree" x="425" y="781" width="26" height="36"/><use href="#tree" x="1019" y="68" width="26" height="36"/><use href="#tree" x="797" y="359" width="26" height="36"/><use href="#tree" x="923" y="604" width="26" height="36"/><use href="#tree" x="752" y="949" width="26" height="36"/><use href="#tree" x="1589" y="55" width="26" height="36"/><use href="#tree" x="1673" y="3" width="26" height="36"/><use href="#tree" x="1753" y="55" width="26" height="36"/><use href="#tree" x="1753" y="256" width="26" height="36"/><use href="#tree" x="2041" y="296" width="26" height="36"/><use href="#tree" x="2269" y="361" width="26" height="36"/><use href="#tree" x="1577" y="441" width="26" height="36"/><use href="#tree" x="1967" y="850" width="26" height="36"/><use href="#tree" x="1342" y="1186" width="26" height="36"/>
          </g>

          <!-- towns -->
          <g class="town">
            <text x="130" y="180" textLength="230">Bobo-Dioulasso</text><text x="154" y="321" textLength="201">Sideradougou</text><text x="65" y="381" textLength="112">Banfora</text><text x="22" y="644" textLength="230">Ferkessedougou</text><text x="532" y="351" textLength="88">Lawra</text><text x="755" y="290" textLength="86">Jeffisi</text><text x="703" y="336" textLength="63">Ping</text><text x="709" y="490" textLength="51">Wa</text><text x="1075" y="231" textLength="75">Paga</text><text x="1096" y="339" textLength="176">Bolgatanga</text><text x="1122" y="612" textLength="136">Savelugu</text><text x="847" y="759" textLength="141">Damongo</text><text x="571" y="1053" textLength="162">Bondoukou</text><text x="796" y="1071" textLength="137">Kintampo</text><text x="24" y="1023" textLength="49">iola</text>
            <text x="1300" y="216" textLength="102">Bawku</text><text x="1837" y="53" textLength="69">Dept</text><text x="2011" y="147" textLength="145">Banikoara</text><text x="2173" y="195" textLength="87">Kandi</text><text x="2358" y="248" textLength="66">Ségb</text><text x="1627" y="444" textLength="155">Natitingou</text><text x="1813" y="417" textLength="128">Kouande</text><text x="2257" y="524" textLength="70">Nikki</text><text x="1705" y="633" textLength="72">Kara</text><text x="1375" y="666" textLength="78">Yendi</text><text x="1804" y="588" textLength="133">Djougou</text><text x="2065" y="738" textLength="133">Parakou</text><text x="1668" y="786" textLength="122">Sokode</text><text x="2302" y="876" textLength="85">Shaki</text><text x="2022" y="972" textLength="112">Ouesse</text><text x="2392" y="831" textLength="32">Igl</text>
            <text x="613" y="1176" textLength="88">Drobo</text><text x="787" y="1134" textLength="109">Wenchi</text><text x="905" y="1200" textLength="151">Techiman</text><text x="718" y="1245" textLength="124">Sunyani</text><text x="857" y="1296" textLength="115">Duayaw</text><text x="857" y="1332" textLength="134">Nkwanka</text><text x="574" y="1308" textLength="116">Dormaa</text><text x="571" y="1344" textLength="120">Ahenkro</text><text x="830" y="1386" textLength="159">Mankranzo</text><text x="362" y="1407" textLength="198">Abengourou</text><text x="61" y="1481" textLength="141">Dimbokro</text><text x="306" y="1584" textLength="109">Adzope</text><text x="195" y="1629" textLength="139">Agboville</text><text x="355" y="1836" textLength="165">Port-Bouët</text><text x="24" y="1896" textLength="117">d-Lahou</text><text x="1113" y="1683" textLength="60">Oda</text><text x="907" y="1716" textLength="171">Twifo Praso</text><text x="1116" y="1746" textLength="94">Agona</text><text x="1099" y="1782" textLength="110">Swedru</text><text x="905" y="1848" textLength="118">Dabaasi</text><text x="1178" y="1839" textLength="138">Winneba</text><text x="1138" y="1509" textLength="140">Nkawkaw</text>
            <text x="1267" y="1584" textLength="152">Koforidua</text><text x="1330" y="1644" textLength="119">Dodowa</text><text x="1563" y="1641" textLength="273">Kilkor-Agbozume</text><text x="1488" y="1224" textLength="109">Jasikan</text><text x="1650" y="1191" textLength="148">Atakpame</text><text x="1498" y="1344" textLength="94">Hohoe</text><text x="1521" y="1443" textLength="46">Ho</text><text x="1821" y="1311" textLength="126">Abomey</text><text x="1996" y="1314" textLength="128">Bohicon</text><text x="1825" y="1436" textLength="120">Lokossa</text><text x="1960" y="1427" textLength="89">Allada</text><text x="1867" y="1533" textLength="102">Ouidah</text><text x="2319" y="1224" textLength="100">Eruwa</text><text x="2346" y="1379" textLength="78">Saga</text>
          </g>
          <g class="town city">
            <text x="1120" y="727" textLength="126">Tamale</text><text x="24" y="1141" textLength="84">uake</text><text x="24" y="1411" textLength="223">amoussoukro</text><text x="276" y="1762" textLength="143">Anyama</text><text x="640" y="1930" textLength="290">Sekondi-Takoradi</text><text x="975" y="1912" textLength="201">Cape Coast</text><text x="904" y="1552" textLength="118">Obuasi</text><text x="2038" y="1476" textLength="191">Porto-Novo</text><text x="2251" y="1289" textLength="158">Abeokuta</text><text x="2284" y="1447" textLength="83">Ikeja</text>
          </g>
          <g class="town capital">
            <text x="156" y="1820" textLength="143">Abidjan</text><text x="909" y="1480" textLength="132">Kumasi</text><text x="1308" y="1724" textLength="109">Accra</text><text x="1693" y="1565" textLength="107">Lome</text><text x="2007" y="1564" textLength="147">Cotonou</text><text x="2284" y="1550" textLength="116">Lagos</text>
          </g>
          <g class="reserve">
            <text x="241" y="562" textLength="151">Dida Forest</text><text x="384" y="844" textLength="106" class="lg">Comoé</text><text x="340" y="880" textLength="195" class="lg">National Park</text><text x="358" y="912" textLength="160" class="sm">Parc National</text><text x="363" y="942" textLength="152" class="sm">de la Comoé</text><text x="943" y="131" textLength="183">Kaboré Tambi</text><text x="946" y="164" textLength="176">National Park</text><text x="831" y="353" textLength="168">Gbele Game</text><text x="831" y="386" textLength="140">Production</text><text x="831" y="419" textLength="109">Reserve</text><text x="906" y="668" textLength="64">Mole</text><text x="850" y="701" textLength="175">National Park</text><text x="688" y="908" textLength="156">Bui National</text><text x="735" y="941" textLength="61">Park</text>
            <text x="1501" y="65" textLength="78">Pama</text><text x="1471" y="98" textLength="108">Reserve</text><text x="1689" y="116" textLength="158">Arli National</text><text x="1738" y="149" textLength="60">Park</text><text x="1647" y="320" textLength="238">Zone Cynegetique</text><text x="1671" y="353" textLength="196">De La Pendjari</text><text x="1950" y="256" textLength="212">Foret de l Alibori</text><text x="1992" y="290" textLength="125">Superieur</text><text x="2224" y="422" textLength="122">Foret des</text><text x="2197" y="455" textLength="175">Trios Rivieres</text><text x="1561" y="506" textLength="60">Kran</text><text x="1504" y="539" textLength="176">National Park</text><text x="1917" y="812" textLength="124">Foret des</text><text x="1894" y="845" textLength="172">Monts Kouffe</text><text x="2284" y="683" textLength="140">Vobera For</text><text x="2394" y="716" textLength="30">re</text><text x="2409" y="547">K</text><text x="2380" y="580" textLength="44">Mar</text><text x="1318" y="1250" textLength="73">Digya</text><text x="1267" y="1282" textLength="176">National Park</text>
          </g>
          <g class="country">
            <text x="991" y="1100" textLength="189">Ghana</text><text x="1613" y="942" textLength="144">Togo</text><text x="1973" y="636" textLength="172">Benin</text>
          </g>

          <g class="pins">
            <use href="#pin" x="836" y="1369"/><use href="#pin" x="932" y="1461"/><use href="#pin" x="848" y="1478"/><use href="#pin" x="1097" y="1473"/><use href="#pin" x="1121" y="1488"/><use href="#pin" x="914" y="1516"/><use href="#pin" x="998" y="1522"/><use href="#pin" x="1013" y="1568"/><use href="#pin" x="1046" y="1627"/>
          </g>

          <!-- pan and zoom controls -->
          <g class="ctl">
            <path class="btn" d="M107 44h47v47h-47zM47 104h47v47H47zM107 104h47v47h-47zM167 104h47v47h-47zM107 164h47v47h-47zM107 239h47v47h-47zM107 851h47v47h-47z"/>
            <path d="M131 55v26M119 68l12-13 12 13M57 127h26M70 115l-13 12 13 12M203 127h-26M190 115l13 12-13 12M131 200v-26M119 187l12 13 12-13M116 262h29M131 248v29M116 875h29"/>
            <path d="M131 108v12M131 147v-12M111 127h12M151 127h-12M116 113l9 9M146 113l-9 9M116 142l9-9M146 142l-9-9M126 116l5 5 5-5M126 139l5-5 5 5M119 122l5 5-5 5M143 122l-5 5 5 5" stroke-width="2.500"/>
            <path d="M131 313v512" stroke-width="43" stroke-dasharray="8 16"/><path d="M131 315.500v512" stroke="#fff" stroke-width="35" stroke-dasharray="3 21"/>
            <path d="M125 299h12v539h-12z" fill="#fff"/><path class="btn" d="M107 641h47v23h-47z"/><path d="M119 653h24"/>
          </g>

          <text class="powered" x="35" y="2030" textLength="131">POWERED BY</text>
          <text class="google" x="32" y="2081" textLength="179"><tspan fill="#1b57d6">G</tspan><tspan fill="#dc2417">o</tspan><tspan fill="#f0b90b">o</tspan><tspan fill="#1b57d6">g</tspan><tspan fill="#24a233">l</tspan><tspan fill="#dc2417">e</tspan></text>
          <text class="legal" x="1951" y="2106" textLength="461">Map data ©2012 <tspan fill="#000">-</tspan> Terms of Use</text>
        </svg>
      </section>
      <aside class="blank"></aside>
    </div>
    <svg class="cursor" viewBox="0 0 12 19"><path d="M.7.7v15l3.600-3.200 2.400 5.500 2.300-1-2.400-5.300h4.700z" fill="#000" stroke="#fff" stroke-width=".8"/></svg>
  </main>

  <footer class="taskbar">
    <i class="grip"></i>
    <div class="task on"><svg><use href="#chrome"/></svg>Media Election - Googl...</div>
    <div class="task"><svg><use href="#cabinet"/></svg>test - File Browser</div>
    <div class="task"><svg><use href="#bird"/></svg>Inbox - selby@busylab...</div>
    <div class="task"><svg viewBox="0 0 22 22"><path d="M1 1h20v20H1z" fill="#4a3f9c"/><path d="M17 5A8 8 0 1 0 17 17" fill="#c9c7ee"/><path d="M4 9h14M4 13h14" stroke="#4a3f9c" stroke-width="1.500"/></svg>Java - MediaElection2/...</div>
    <div class="task"><svg><use href="#term"/></svg>selby@selby:~</div>
    <div class="task"><svg><use href="#toolbox"/></svg>GWT Development Mo...</div>
    <div class="task"><svg><use href="#cabinet"/></svg>selby - File Browser</div>
    <div class="pager"><span><svg><use href="#chrome"/></svg></span></div>
    <svg class="trash" viewBox="0 0 20 20"><path d="M1 3h18l-2 17H3z" fill="#2f66ab" stroke="#1c4680"/><path d="M1 1h18v4H1z" fill="#6596d0" stroke="#1c4680"/><path d="M5 7l1 11" stroke="#8fb6e2" stroke-width="2"/></svg>
  </footer>
</div>
</body>
</html>
```

FILE: styles.css
```css
* { box-sizing: border-box; }
body { margin: 0; font-family: "DejaVu Sans", sans-serif; font-size: 13px; color: #111; }
h1, h2, p { margin: 0; }
svg { display: block; flex: none; }
.defs { position: absolute; }
.desktop { width: 1680px; height: 1050px; display: flex; flex-direction: column; overflow: hidden; background: #edecea; }

.panel { height: 26px; display: flex; align-items: center; padding: 0 8px 3px; background: #edecea; border-bottom: 1px solid #b5b2ad; white-space: nowrap; flex: none; }
.foot { width: 21px; height: 21px; }
.menus { display: flex; gap: 14.500px; margin-left: 6px; width: 216px; }
.launchers { display: flex; gap: 10px; }
.launchers svg { width: 22px; height: 22px; }
.tray { display: flex; align-items: center; margin-left: auto; }
.grip { width: 5px; height: 18px; background: radial-gradient(circle, #aaa 0 .8px, transparent 1px) 0 0 / 2.500px 3px; }
.tray svg { width: 22px; height: 22px; }
.tray .sun { margin-left: 6px; }
.tray .vol { margin-left: 6px; }
.tray .net { margin-left: 8px; }
.clock { margin-left: 33px; word-spacing: .6px; }
.who { margin-left: 20px; }

.tabstrip { position: relative; height: 25px; padding-left: 3px; display: flex; background: #6a8ab1; border-top: 1px solid #55759d; flex: none; }
.tab { position: relative; width: 155px; height: 24px; display: flex; align-items: center; padding: 0 0 0 14px; font-size: 12px; color: #26364c; }
.tab .shape { position: absolute; left: 0; top: 0; width: 172px; height: 24px; fill: url(#tabFill); stroke: #71839f; }
.tab:nth-child(1) { z-index: 9; } .tab:nth-child(2) { z-index: 8; } .tab:nth-child(3) { z-index: 7; }
.tab:nth-child(4) { z-index: 6; } .tab:nth-child(5) { z-index: 5; } .tab:nth-child(6) { z-index: 4; }
.tab:nth-child(7) { z-index: 3; } .tab:nth-child(8) { z-index: 2; } .tab:nth-child(9) { z-index: 1; }
.tab.active { z-index: 10; color: #111; margin-left: -6px; padding-left: 15px; width: 160px; }
.tab.active .shape { fill: #edecea; stroke: #5b7396; }
.fav { position: relative; width: 16px; height: 16px; }
.tab span { position: relative; width: 108px; margin-left: 3.500px; white-space: nowrap; -webkit-mask-image: linear-gradient(90deg, #000 72px, transparent 112px); mask-image: linear-gradient(90deg, #000 72px, transparent 112px); }
.tab.active span { -webkit-mask-image: none; mask-image: none; }
.tab i { position: relative; width: 14px; margin-left: 1px; font-style: normal; font-size: 14px; text-align: center; color: #8793a5; }
.newtab { width: 27px; height: 18px; margin: 3px 0 0 3px; }
.winbtns { display: flex; gap: 4px; margin-left: auto; padding: 1px 3px 0 0; }
.winbtns svg { width: 23px; height: 18px; border: 1px solid #8aa4c8; border-radius: 2px; outline: 1px solid #58779f; }

.toolbar { height: 36px; display: flex; align-items: center; padding: 0 13px 2px 11px; border-bottom: 1px solid #aaa; flex: none; }
.nav-ic { width: 20px; height: 20px; margin-right: 12px; }
.url { flex: 1; height: 28px; display: flex; align-items: center; margin: 1px 13px 0 0; padding: 0 3px 2px 6px; background: #fff; border: 1px solid #111; border-width: 2px 1px 1px 2px; border-color: #111 #ddd #ddd #333; font-size: 13.500px; color: #8a8a8a; }
.url > svg:first-child { width: 12px; height: 16px; }
.url p { flex: 1; margin-left: 6px; white-space: nowrap; letter-spacing: .01px; }
.url b { font-weight: normal; color: #111; }
.gwt { width: 19px; height: 19px; margin-right: 3px; }
.star { width: 18px; height: 19px; }
.wrench { width: 18px; height: 18px; }

.site { position: relative; flex: 1; min-height: 0; background-color: #f3f3f3; background-image: repeating-linear-gradient(90deg, rgba(255,255,255,.2) 0 1px, transparent 1px 4px, rgba(0,0,0,.006) 4px 5px, transparent 5px 11px), repeating-linear-gradient(0deg, rgba(255,255,255,.2) 0 1px, transparent 1px 4px, rgba(0,0,0,.008) 4px 5px, transparent 5px 13px); }
.topbar { height: 64px; display: flex; align-items: center; background: #000; padding-left: 658px; }
.prev { width: 28px; height: 42px; }
.topbar h1 { width: 500px; margin: -1px 0 0 42px; font: 39px "Liberation Sans", Arial, sans-serif; letter-spacing: .3px; color: #fff; }
.user { width: 38px; height: 42px; margin-top: -3px; }
.caret { width: 17px; height: 12px; margin: -3px 0 0 162px; }

.content { display: flex; align-items: flex-start; padding: 10px 0 0 225px; }
.side { width: 142px; font-family: "Liberation Serif", "Times New Roman", serif; color: #a3a3a3; }
.item { height: 86px; display: flex; padding: 26px 0 0 9px; border: 1px solid transparent; border-width: 0 0 0 1px; }
.item svg { width: 32px; height: 32px; margin-top: 4px; fill: url(#iconGrey); }
.item .bg { fill: #f5f5f5; }
.item div { margin-left: 9px; }
.item h2 { font-size: 16.500px; line-height: 20px; color: #999; }
.item p { width: 88px; font-size: 12px; line-height: 20px; }
.item.active { height: 89px; background: #fafafa; border: 1px solid #d6d6d6; border-right: 0; border-bottom: 2px solid #cfcfcf; border-radius: 4px 0 0 4px; padding-top: 26px; box-shadow: 0 1px 2px rgba(0,0,0,.12); }
.card { width: 822px; height: 750px; padding: 10px 0 0 11px; background: #fafafa; border-top: 1px solid #d9d9d9; border-right: 1px solid #d2d2d2; border-bottom: 2px solid #c8c8c8; border-radius: 0 2px 3px 0; }
.blank { width: 252px; height: 750px; margin-left: 12px; border: 1px solid #dcdcdc; }
.cursor { position: absolute; left: 1302px; top: 403px; width: 12px; height: 19px; }

.map { width: 800px; height: 700px; overflow: hidden; font-family: "Liberation Sans", Arial, sans-serif; }
.park path { fill: #cadfaf; }
.water { fill: #a5bfdd; }
.stream { fill: none; stroke: #b4cbe6; stroke-width: 3; stroke-linejoin: round; }
.minor { fill: none; stroke: #e8d5bb; stroke-width: 3; stroke-linejoin: round; }
.dash { fill: none; stroke: #b0b0b0; stroke-width: 2.800; stroke-dasharray: 18 7; stroke-linejoin: round; }
.road { fill: none; stroke: #e8a540; stroke-width: 4; stroke-linejoin: round; }
.border { fill: none; stroke: #666; stroke-width: 5.500; stroke-linejoin: round; }
.dots { fill: #fff; stroke: #5c5c5c; stroke-width: 2.500; }
.dots.big { stroke: #222; stroke-width: 3.500; }
.map text { paint-order: stroke; stroke: #f4f3f0; stroke-width: 6px; stroke-linejoin: round; stroke-opacity: .8; }
.town { font-size: 34px; fill: #54443a; }
.city { font-size: 38.500px; fill: #3b3029; }
.capital { font-size: 43px; fill: #1c1c1c; }
.reserve { font-size: 30.500px; fill: #245228; }
.reserve text { stroke: #e4edd6; stroke-width: 5px; }
.reserve .lg { font-size: 33px; }
.reserve .sm { font-size: 26px; }
.country { font-size: 53px; font-weight: bold; fill: #000; }
.ctl { fill: none; stroke: #000; stroke-width: 3; }
.ctl .btn { fill: #fff; filter: drop-shadow(3px 3px 1px rgba(0,0,0,.5)); }
.map .powered { font-size: 19px; fill: #555; stroke: none; }
.map .google { font: 66px "Liberation Serif", serif; stroke: none; filter: drop-shadow(3px 3px 1px rgba(0,0,0,.45)); }
.map .google tspan { stroke-width: 0; }
.map .legal { font-size: 32px; fill: #7777cc; stroke: none; }

.taskbar { height: 25px; display: flex; align-items: center; gap: 3px; padding: 0 3px 0 4px; background: #edecea; border-top: 1px solid #fff; white-space: nowrap; flex: none; }
.task { width: 199px; height: 23px; display: flex; align-items: center; padding: 0 0 2px 6px; gap: 7px; border: 1px solid #8d8a85; border-radius: 3px; background: linear-gradient(#fff, #e9e8e6); }
.task.on { background: linear-gradient(#bfbcb8, #cfccc8); padding-bottom: 1px; }
.task svg { width: 17px; height: 17px; }
.pager { display: flex; width: 66px; height: 20px; margin-left: auto; background: #aaa7a3; border: 1px solid #999; }
.pager span { width: 32px; background: #d3e2f2; display: grid; place-items: center; border-bottom: 2px solid #5883b5; }
.pager svg { width: 15px; height: 15px; }
.trash { width: 20px; height: 20px; margin-left: 9px; }
```
